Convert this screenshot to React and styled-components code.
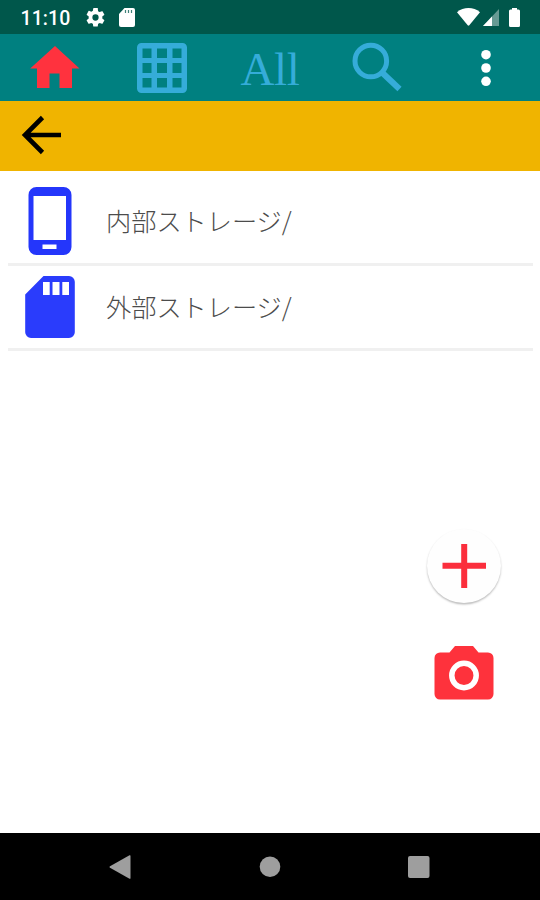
import React from "react";
import styled, { createGlobalStyle } from "styled-components";

const GlobalStyle = createGlobalStyle`
  * {
    box-sizing: border-box;
  }
  body {
    margin: 0;
    background-color: #ffffff;
  }
`;

const Screen = styled.div`
  position: relative;
  width: 540px;
  height: 900px;
  display: flex;
  flex-direction: column;
  overflow: hidden;
  background-color: #ffffff;
  font-family: Roboto, "Noto Sans CJK JP", sans-serif;
`;

const Icon = styled.svg`
  display: block;
  flex: none;
  overflow: visible;
`;

const StatusBar = styled.header`
  height: 34px;
  flex: none;
  display: flex;
  align-items: center;
  justify-content: space-between;
  padding: 0 20.5px;
  background-color: #00574b;
  color: white;
`;

const StatusGroup = styled.div`
  display: flex;
  align-items: center;
  gap: ${(props) => props.$gap};
`;

const Clock = styled.span`
  width: 51px;
  font-size: 19.5px;
  font-weight: 500;
  line-height: 34px;
  letter-spacing: 0.1px;
  white-space: nowrap;
  padding-top: 3px;
`;

const BatterySlot = styled.div`
  padding-left: 6px;
`;

const Toolbar = styled.nav`
  height: 67px;
  flex: none;
  display: grid;
  grid-template-columns: repeat(5, 108px);
  grid-template-rows: 67px;
  background-color: #008080;
`;

const Tool = styled.button`
  display: flex;
  align-items: center;
  justify-content: center;
  border: none;
  padding: 1px 0 0;
  background: none;
  color: ${(props) => props.$color || "#35acd9"};
  cursor: pointer;
`;

const AllLabel = styled.span`
  font-family: "Liberation Serif", serif;
  font-size: 47px;
  line-height: 64px;
  letter-spacing: -0.4px;
  padding-top: 2px;
`;

const PathBar = styled.div`
  height: 70px;
  flex: none;
  display: flex;
  align-items: center;
  padding: 0 0 2px 22px;
  background-color: #f0b400;
`;

const StorageList = styled.ul`
  flex: 1;
  margin: 0;
  padding: 7px 7px 0 8px;
  list-style: none;
`;

const StorageItem = styled.li`
  height: ${(props) => props.$height};
  display: flex;
  align-items: center;
  border-bottom: 3px solid #f0f0f0;
`;

const IconSlot = styled.div`
  width: 98px;
  padding-left: 17px;
  flex: none;
`;

const StorageName = styled.span`
  font-family: "Noto Sans CJK JP", sans-serif;
  font-size: 25.2px;
  font-weight: 300;
  line-height: 36px;
  color: #4c4c4c;
  white-space: nowrap;
  padding-bottom: 2px;
`;

/* floats over the list */
const Actions = styled.div`
  position: absolute;
  right: 39px;
  bottom: 200px;
  display: flex;
  flex-direction: column;
  align-items: center;
  gap: 43px;
`;

const AddButton = styled.button`
  width: 74px;
  height: 74px;
  display: flex;
  align-items: center;
  justify-content: center;
  border: none;
  border-radius: 50%;
  padding: 0;
  background-color: #fefefe;
  box-shadow: 0 1.5px 2px rgba(0, 0, 0, 0.26);
  cursor: pointer;
`;

const CameraButton = styled.button`
  border: none;
  padding: 0;
  background: none;
  cursor: pointer;
`;

const NavBar = styled.footer`
  height: 67px;
  flex: none;
  display: flex;
  align-items: center;
  justify-content: space-between;
  padding: 0 110px 0 109px;
  background-color: #000000;
`;

const GearIcon = () => (
  <Icon width="19" height="19" viewBox="2 2 20 20" fill="currentColor">
    <path d="M19.14 12.94c.04-.3.06-.61.06-.94s-.02-.64-.07-.94l2.03-1.58a.49.49 0 0 0 .12-.61l-1.92-3.32a.49.49 0 0 0-.59-.22l-2.39.96a7 7 0 0 0-1.62-.94l-.36-2.54A.48.48 0 0 0 13.92 2h-3.84a.48.48 0 0 0-.47.41l-.36 2.54c-.59.24-1.13.57-1.62.94l-2.39-.96a.48.48 0 0 0-.59.22L2.74 8.87a.48.48 0 0 0 .12.61l2.03 1.58c-.05.3-.09.63-.09.94s.02.64.07.94l-2.03 1.58a.49.49 0 0 0-.12.61l1.92 3.32c.12.22.37.29.59.22l2.39-.96c.5.38 1.03.7 1.62.94l.36 2.54c.05.24.24.41.48.41h3.84c.24 0 .44-.17.47-.41l.36-2.54a7 7 0 0 0 1.62-.94l2.39.96c.22.08.47 0 .59-.22l1.92-3.32a.48.48 0 0 0-.12-.61zM12 15.3a3.3 3.3 0 1 1 0-6.6 3.3 3.3 0 0 1 0 6.6z" />
  </Icon>
);

const SmallCardIcon = () => (
  <Icon width="16" height="19" viewBox="0 0 16 19">
    <path fill="currentColor" d="M5.5 0H14a2 2 0 0 1 2 2v15a2 2 0 0 1-2 2H2a2 2 0 0 1-2-2V6z" />
    <path stroke="#00574b" strokeWidth="1.2" opacity="0.75" d="M6.5 2v3M9.5 2v3M12.5 2v3" />
  </Icon>
);

const WifiIcon = () => (
  <Icon width="23" height="18" viewBox="0 0 23 18" fill="currentColor">
    <path d="M0 4.2C6.5-1.4 16.5-1.4 23 4.2L12.3 17.2q-.8.9-1.6 0z" />
  </Icon>
);

const SignalIcon = () => (
  <Icon width="16" height="17" viewBox="0 0 16 17" fill="currentColor">
    <path opacity="0.4" d="M16 0v17H0z" />
    <path d="M9 7.5V17H0z" />
  </Icon>
);

const BatteryIcon = () => (
  <Icon width="11" height="19" viewBox="0 0 11 19" fill="currentColor">
    <path d="M3 0h5v1.5h1.5A1.5 1.5 0 0 1 11 3v14.5a1.5 1.5 0 0 1-1.5 1.5h-8A1.5 1.5 0 0 1 0 17.5V3a1.5 1.5 0 0 1 1.5-1.5H3z" />
  </Icon>
);

const HomeIcon = () => (
  <Icon width="50" height="50" viewBox="0 0 50 50" fill="currentColor">
    <path d="M26 3 50.5 25.5H43V45H30.5V30.5h-10V45H8V25.5H1.2z" />
  </Icon>
);

const GridIcon = () => (
  <Icon width="50" height="50" viewBox="0 0 50 50" fill="currentColor">
    <path
      fillRule="evenodd"
      d="M4.500 0h41A4.500 4.500 0 0 1 50 4.500v41a4.500 4.500 0 0 1-4.500 4.500h-41A4.500 4.500 0 0 1 0 45.500v-41A4.500 4.500 0 0 1 4.500 0zM5.500 5.500v9.500h9v-9.500zM20 5.500v9.500h10v-9.500zM35.500 5.500v9.500h9v-9.500zM5.500 20v10h9V20zM20 20v10h10V20zM35.500 20v10h9V20zM5.500 35v9.500h9V35zM20 35v9.500h10V35zM35.500 35v9.500h9V35z"
    />
  </Icon>
);

const SearchIcon = () => (
  <Icon width="50" height="50" viewBox="0 0 50 50" fill="none" stroke="currentColor">
    <circle cx="17.8" cy="18" r="15.8" strokeWidth="5" />
    <path d="M28.5 29 46.5 46" strokeWidth="6" />
  </Icon>
);

const MoreIcon = () => (
  <Icon width="10" height="38" viewBox="0 0 10 38" fill="currentColor">
    <circle cx="5" cy="5.7" r="4.8" />
    <circle cx="5" cy="19" r="4.8" />
    <circle cx="5" cy="32.3" r="4.8" />
  </Icon>
);

const BackIcon = () => (
  <Icon width="39" height="38" viewBox="0 0 39 38" fill="none" stroke="#000000">
    <path d="M39 19H4M20.5 1.5 3 19l17.5 17.5" strokeWidth="4.6" />
  </Icon>
);

const PhoneIcon = () => (
  <Icon width="50" height="68" viewBox="0 0 50 68">
    <path
      fill="#2436fb"
      fillRule="evenodd"
      d="M11.5 0h27a8 8 0 0 1 8 8v52a8 8 0 0 1-8 8h-27a8 8 0 0 1-8-8V8a8 8 0 0 1 8-8zM8.5 9v44h32.500V9zM17.5 57.500v4.500h14v-4.500z"
    />
  </Icon>
);

const CardIcon = () => (
  <Icon width="50" height="62" viewBox="0 0 50 62">
    <path
      fill="#2a3cfc"
      fillRule="evenodd"
      d="M18.5 0H44a5.8 5.8 0 0 1 5.8 5.8v50.4A5.8 5.8 0 0 1 44 62H6a5.8 5.8 0 0 1-5.8-5.8V18.5zM18 6v13h6.7V6zM27.5 6v13h7V6zM37.3 6v13H44V6z"
    />
  </Icon>
);

const PlusIcon = () => (
  <Icon width="44" height="44" viewBox="0 0 44 44" stroke="#fb2e3c" strokeWidth="6">
    <path d="M0.5 21.7h43.5M22.2 0v44" />
  </Icon>
);

const CameraIcon = () => (
  <Icon width="60" height="54" viewBox="0 0 60 54">
    <path
      fill="#fe323c"
      d="M21 0h18l5.5 6.5H54a5.5 5.5 0 0 1 5.5 5.5v36a5.5 5.5 0 0 1-5.5 5.5H6A5.5 5.5 0 0 1 .5 48V12A5.5 5.5 0 0 1 6 6.5h9.5z"
    />
    <circle cx="30" cy="29.5" r="12.2" fill="none" stroke="#ffffff" strokeWidth="5.5" />
  </Icon>
);

const NavBackIcon = () => (
  <Icon width="22" height="24" viewBox="0 0 22 24" fill="#9e9e9e">
    <path d="M20.5.3q1-.5 1 .7v22q0 1.2-1 .7L1 12.7q-1.2-.7 0-1.4z" />
  </Icon>
);

const NavHomeIcon = () => (
  <Icon width="21" height="21" viewBox="0 0 21 21" fill="#9e9e9e">
    <circle cx="11" cy="10.8" r="10.3" />
  </Icon>
);

const NavRecentIcon = () => (
  <Icon width="22" height="22" viewBox="0 0 22 22" fill="#9e9e9e">
    <rect width="21.5" height="22" rx="2" />
  </Icon>
);

const storages = [
  { name: "内部ストレージ/", icon: <PhoneIcon />, height: "88px" },
  { name: "外部ストレージ/", icon: <CardIcon />, height: "85px" },
];

const App = () => {
  return (
    <Screen>
      <GlobalStyle />
      <StatusBar>
        <StatusGroup $gap="14px">
          <Clock>11:10</Clock>
          <GearIcon />
          <SmallCardIcon />
        </StatusGroup>
        <StatusGroup $gap="3.5px">
          <WifiIcon />
          <SignalIcon />
          <BatterySlot>
            <BatteryIcon />
          </BatterySlot>
        </StatusGroup>
      </StatusBar>
      <Toolbar>
        <Tool $color="#ff323e">
          <HomeIcon />
        </Tool>
        <Tool>
          <GridIcon />
        </Tool>
        <Tool>
          <AllLabel>All</AllLabel>
        </Tool>
        <Tool>
          <SearchIcon />
        </Tool>
        <Tool $color="#ffffff">
          <MoreIcon />
        </Tool>
      </Toolbar>
      <PathBar>
        <BackIcon />
      </PathBar>
      <StorageList>
        {storages.map((item) => (
          <StorageItem key={item.name} $height={item.height}>
            <IconSlot>{item.icon}</IconSlot>
            <StorageName>{item.name}</StorageName>
          </StorageItem>
        ))}
      </StorageList>
      <Actions>
        <AddButton>
          <PlusIcon />
        </AddButton>
        <CameraButton>
          <CameraIcon />
        </CameraButton>
      </Actions>
      <NavBar>
        <NavBackIcon />
        <NavHomeIcon />
        <NavRecentIcon />
      </NavBar>
    </Screen>
  );
};

export default App;
